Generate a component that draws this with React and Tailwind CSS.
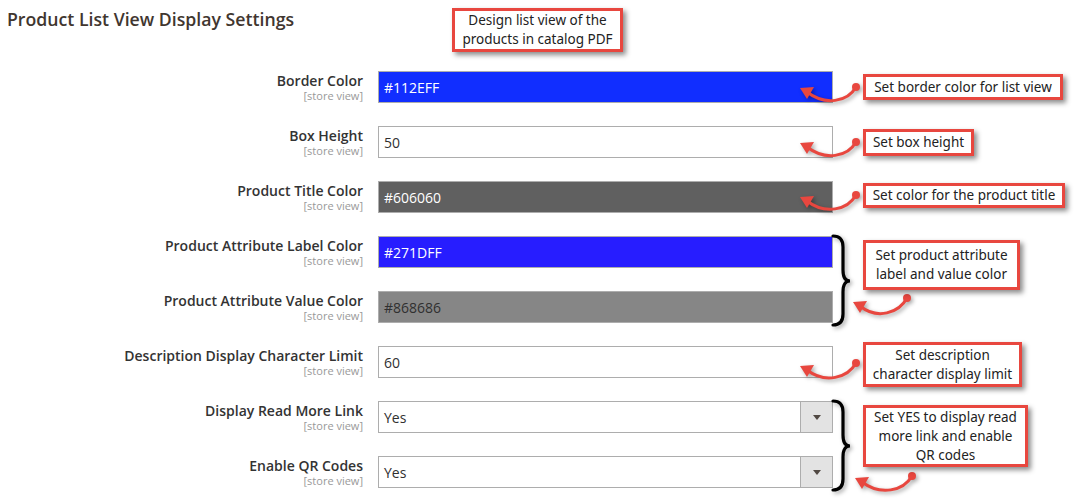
import React from "react";

const rows = [
  { label: "Border Color", type: "color", value: "#112EFF", bg: "bg-[#112eff]", text: "text-white" },
  { label: "Box Height", type: "text", value: "50" },
  { label: "Product Title Color", type: "color", value: "#606060", bg: "bg-[#606060]", text: "text-white" },
  { label: "Product Attribute Label Color", type: "color", value: "#271DFF", bg: "bg-[#271dff]", text: "text-white" },
  { label: "Product Attribute Value Color", type: "color", value: "#868686", bg: "bg-[#868686]", text: "text-[#303030]" },
  { label: "Description Display Character Limit", type: "text", value: "60" },
  { label: "Display Read More Link", type: "select", value: "Yes" },
  { label: "Enable QR Codes", type: "select", value: "Yes" },
];

const notes = [
  { text: ["Design list view of the", "products in catalog PDF"], cls: "left-[452px] top-[8px] w-[171px] h-[44px]" },
  { text: ["Set border color for list view"], cls: "left-[863px] top-[74px] w-[200px] h-[26px]" },
  { text: ["Set box height"], cls: "left-[863px] top-[129px] w-[111px] h-[27px]" },
  { text: ["Set color for the product title"], cls: "left-[863px] top-[183px] w-[202px] h-[25px]" },
  { text: ["Set product attribute", "label and value color"], cls: "left-[863px] top-[240px] w-[157px] h-[50px]" },
  { text: ["Set description", "character display limit"], cls: "left-[863px] top-[342px] w-[159px] h-[45px]" },
  { text: ["Set YES to display read", "more link and enable", "QR codes"], cls: "left-[863px] top-[405px] w-[165px] h-[62px]" },
];

// dot -> tip
const arrows = [
  [856, 87, 800, 88],
  [856, 142, 800, 143],
  [856, 195, 800, 197],
  [907, 298, 853, 302],
  [856, 363, 800, 366],
  [912, 476, 855, 478],
];

function Field({ row }) {
  if (row.type === "select") {
    return (
      <div className="flex h-[32px] w-[455px] border border-[#adadad] bg-white">
        <div className="flex flex-1 items-center px-[5px] text-[14px] text-[#303030]">{row.value}</div>
        <div className="flex w-[32px] items-center justify-center border-l border-[#adadad] bg-[#e3e3e3]">
          <div className="h-0 w-0 border-x-[4px] border-t-[5px] border-x-transparent border-t-[#514943]" />
        </div>
      </div>
    );
  }
  return (
    <div
      className={`flex h-[32px] w-[455px] items-center border border-[#adadad] px-[5px] text-[14px] ${
        row.bg || "bg-white"
      } ${row.text || "text-[#303030]"}`}
    >
      {row.value}
    </div>
  );
}

function Brace({ top }) {
  const b = top + 89;
  const m = top + 45;
  return (
    <path
      d={`M833 ${top} Q843 ${top} 843 ${top + 11} L843 ${m - 11} Q843 ${m} 850 ${m} Q843 ${m} 843 ${m + 11} L843 ${b - 11} Q843 ${b} 833 ${b}`}
      fill="none"
      stroke="#000"
      strokeWidth="3.2"
      strokeLinecap="round"
    />
  );
}

export default function App() {
  return (
    <div className="relative h-[500px] w-[1077px] overflow-hidden bg-white font-['Open_Sans',sans-serif]">
      <h2 className="pl-[7px] pt-[7px] text-[17.7px] font-semibold leading-6 text-[#41362f]">
        Product List View Display Settings
      </h2>

      <div className="mt-[40px] flex flex-col gap-[23px]">
        {rows.map((row) => (
          <div key={row.label} className="flex">
            <div className="w-[363px] pt-[1px] text-right">
              <div className="text-[14px] font-semibold leading-[18px] text-[#333]">{row.label}</div>
              <div className="text-[11px] leading-[12px] text-[#999]">[store view]</div>
            </div>
            <div className="ml-[15px]">
              <Field row={row} />
            </div>
          </div>
        ))}
      </div>

      <svg className="pointer-events-none absolute left-0 top-0 drop-shadow-[2px_2px_2px_rgba(0,0,0,0.35)]" width="1077" height="500">
        <Brace top={236} />
        <Brace top={401} />
        {arrows.map(([dx, dy, tx, ty], i) => {
          const len = dx - tx;
          return (
            <g key={i} fill="#e8473f" stroke="#e8473f">
              <circle cx={dx} cy={dy} r="4" stroke="none" />
              <path
                d={`M${dx} ${dy} C${dx - len * 0.15} ${dy + 15} ${tx + len * 0.45} ${ty + 18} ${tx + 7} ${ty + 4}`}
                fill="none"
                strokeWidth="3"
                strokeLinecap="round"
              />
              <polygon points={`${tx},${ty} ${tx + 14},${ty - 1} ${tx + 7},${ty + 11}`} stroke="none" />
            </g>
          );
        })}
      </svg>

      {notes.map((n, i) => (
        <div
          key={i}
          className={`absolute flex flex-col items-center justify-center border-[3px] border-[#e8473f] bg-white text-center text-[13.5px] leading-[19px] text-[#222] shadow-[3px_3px_5px_rgba(0,0,0,0.45)] font-['Noto_Sans',sans-serif] ${n.cls}`}
        >
          {n.text.map((t) => (
            <div key={t} className="whitespace-nowrap">{t}</div>
          ))}
        </div>
      ))}
    </div>
  );
}
